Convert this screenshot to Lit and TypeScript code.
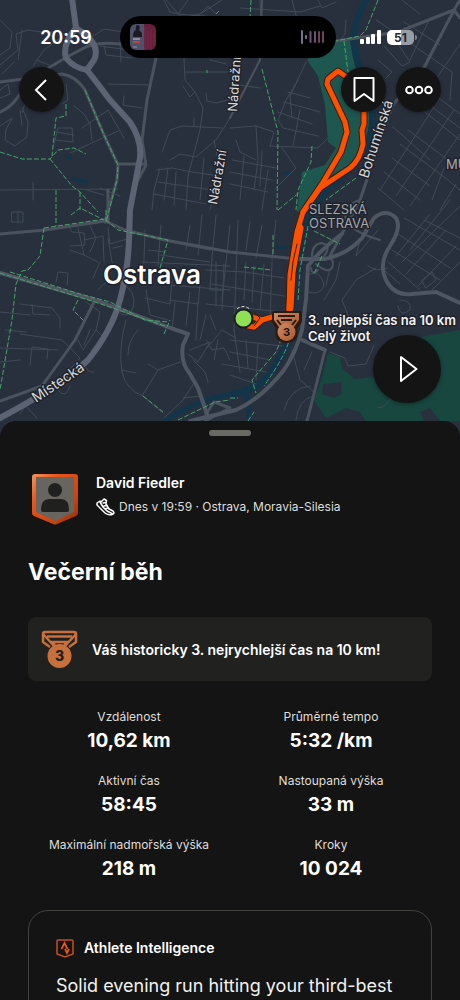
import { LitElement, html, css, svg } from "lit";
import { customElement } from "lit/decorators.js";

/* ---------- map geometry ---------- */
const minorRoads = [
  // north-west
  "M0 20L12 32L10 48L0 55M0 65L18 50L16 34L28 30L48 33L60 30M22 112L28 95M0 90L8 84L10 94L0 98M2 74L14 62M18 60L22 30M33 66L44 50L60 38M36 60L52 66M0 126L12 118L6 130L5 140L15 146L27 137L28 122L22 108M20 110L22 125M66 84L68 100L62 104M54 144L58 128L72 128L73 142L55 140M56 132L74 135M74 106L84 114L90 124L92 140M82 128L108 110L124 138M70 153L118 131M104 46L106 55L132 58M100 46L136 51M120 40L121 62M108 84L150 85M124 96L123 105L142 108M90 38L104 29L136 34M164 0L170 12L178 14L205 16M166 0L182 18L200 14L222 0M178 14L188 0M200 14L208 6L216 14",
  "M184 58L185 80L195 92L190 97L183 86M185 72L228 72M195 92L203 108L200 130L188 176L186 210M206 93L207 101L216 103L228 100M210 60L226 64M162 152L170 130L182 126L222 128M194 118L194 126M170 160L180 154L196 157L216 140L230 118M160 168L154 190L152 210M156 170L172 168L192 172L220 176M158 182L212 190M154 194L206 204M168 168L164 200M176 172L174 205M214 140L220 170L210 210M204 158L200 200",
  // west
  "M0 190L118 189M33 182L33 200M18 211V223M12 212H23V222H12ZM100 188L120 196M86 190L104 195",
  "M68 225L72 232L84 233L85 245L70 246M78 228L84 255L98 262M90 226L96 238L90 252M84 240L103 236L104 262M100 262L93 278M70 250L84 255M56 282L58 272L68 273L67 285M108 228L110 244L127 239M108 238L112 262L124 275M113 248L122 246M145 230L144 260L142 280M161 225L158 265M170 242L210 250M160 255L210 262M142 262L230 266M148 250L165 252",
  // south-west
  "M20 304L52 308L60 318L60 328M32 304L33 314L50 315M0 312L30 315M20 334L62 340M0 348L58 350M30 365L32 347L48 349L47 359M20 360L0 362M5 330L26 332M62 340L80 358L62 378L45 388M78 340L83 350L96 330M98 290Q104 280 118 281Q138 290 133 308Q128 320 118 312M86 302L100 312L96 330L106 340M90 330L84 345M126 320Q118 350 122 372Q126 390 143 396M138 330Q128 340 128 355M122 370L136 373M142 396L158 370L180 362M158 370L148 364M143 396L163 413M164 418L183 400L196 380M22 402L37 418M20 414L26 405M84 366Q90 374 94 372M58 390Q66 400 70 386M183 398L202 396M190 350L210 342L198 362L188 354M193 360L205 372L208 382",
  // center
  "M190 225L186 250M202 215L198 255M216 215L212 258L210 290L224 290M230 225L222 300M238 220L234 330M250 222L246 250M262 225L256 258M276 220L272 260M168 285L230 290M170 300L198 304L200 285M145 298L170 304L172 280M146 290L150 315L168 320M175 302L172 330M198 302L196 340M190 292L186 325M205 270L245 272L284 278M212 284L284 296M206 304L282 312M216 262V306M224 264L222 310M246 262L244 300M254 266L252 302M264 264L260 310M272 262L270 320M206 340L212 350L224 348L230 360M207 348L222 330L236 338M216 330L210 315M200 340L206 315M230 340L282 346M234 330L240 372M246 340L248 368M258 344L256 380M230 352L270 360M222 364L266 372M230 375L256 384M218 340L214 360",
  // north-center
  "M240 8L300 12L320 6M260 0L262 45M245 20L266 18M248 30L262 28M292 0L300 30L310 24M318 0L322 8L336 2M346 20L345 34L336 45M230 104L232 72M232 84L260 88M306 62L290 96L292 118M298 80L286 100L278 120L283 128L318 136M288 92L310 98M284 102L320 112M278 112L312 124M230 128L256 126L274 132L270 146L318 148L328 138M236 140L240 152L256 160M256 126L258 160L254 190M232 160L276 168M230 172L272 180M230 184L268 192M244 156L240 200M262 150L260 186M268 170L262 210M300 110L293 146M282 148L296 168L276 188",
  // north-east
  "M384 46L402 66L410 62L394 38M378 60L392 72L386 78M398 34L420 50L452 72L450 100M404 22L440 45M402 0L420 14M376 20L400 36M430 18L410 60M446 24L416 80M460 44L430 88M456 10L440 35M425 112L460 140M428 104L460 128M436 96L460 114M408 130L448 160L460 170M400 144L448 180L460 190M392 158L430 186M384 172L420 200M378 188L404 210M440 98L380 190M454 110L396 196M460 134L410 206M444 168L432 200M456 184L440 210M392 126L430 160",
  // east
  "M460 206L402 262M450 200L410 250M404 218L460 250M398 234L450 268M392 250L440 280M388 262L420 290M384 270L400 284M430 214L396 256M446 230L406 274M456 246L418 286M460 262L432 290M424 220L460 238M422 280L432 272L436 280L426 288ZM400 300Q412 300 410 310Q400 318 398 306M368 266L376 270L388 268M304 370L312 352M292 350L300 380L314 392M330 352L345 358L348 366L366 364L374 345M284 410Q290 388 310 386M296 420Q298 400 313 396M360 240L356 256L378 230M340 262L336 280L324 300M350 320L342 300L356 280L376 268M326 285L330 268M310 274Q320 270 324 284Q322 296 308 292M378 408Q386 408 392 396L386 378",
];
const midRoads = [
  "M0 82L62 74Q76 76 85 90L104 135L118 165L117 180L105 222",
  "M0 112Q12 108 24 88Q40 70 88 46Q100 42 120 44",
  "M156 58L147 100L142 140L146 165L138 180",
  "M118 164H145",
  "M0 234L45 230L105 221L125 230L165 240L230 252L297 259",
  "M108 222V190M128 240L128 280",
  "M336 41L398 32L454 10L460 0M454 10L425 66L392 106L360 200L330 256M454 10L460 18",
  "M325 350L315 390L307 421",
  "M0 401L42 386L75 340L94 302",
  "M205 421L230 408L214 402L206 414",
];
const thinMainRoads = [
  "M230 118L260 60L262 0M312 256Q312 244 322 243Q332 246 324 256M316 264Q328 274 332 268Q336 256 322 258M311 268Q312 276 318 270M380 240Q352 232 346 220Q342 206 360 200",
];
const bigRoads = [
  "M0 273L95 300L165 326L188 334L183 345Q180 362 190 374L198 388L207 414",
  "M296 259H325Q348 254 362 238L374 218Q386 208 396 218Q402 228 390 246Q378 264 386 280Q394 296 412 294L436 292L460 303",
  "M342 234Q320 250 308 266L306 300L302 330Q296 352 284 370Q262 398 236 410L190 421",
  "M302 340L325 350",
];
const highway = [
  "M72 -2L76 28Q62 44 66 58Q74 68 87 70Q98 84 110 100L130 122Q142 140 140 158L130 210L129 240Q128 270 120 300Q112 330 88 360Q60 386 0 418",
  "M76 28Q102 44 94 60L87 70",
];
const trails = [
  "M85 90L104 135L118 165L117 180L106 222",
  "M66 104V116L56 118L52 156M0 152L22 159H50L58 150L74 148L86 154M50 159L72 186L80 192L98 212M80 192V210",
  "M56 190V226M44 228L105 219L118 230L168 240L164 254L160 268M44 228L40 256L28 270L22 271L16 284L12 320L0 390M71 215L80 208L104 220M106 210V222",
  "M0 273L95 302L165 326M10 272L80 294L110 302L145 320L168 322M78 300L73 310L84 321M164 334L170 320M143 396L163 412",
  "M178 420L215 402L230 400M251 0L250 18L252 28M262 69L278 132L277 210",
  "M378 0L366 30L360 36L336 41M344 41L348 72M312 146L311 162L298 190L296 210M278 210Q290 200 300 192",
  "M356 178L326 200M314 231L340 244M322 256L314 274M308 226L300 270L298 300M244 267L272 270M273 235V255M284 332L276 352L252 380L256 393M290 336Q288 352 264 386M230 398H238M248 421L254 412M207 70V73M216 14L219 11",
];
const outwardLeg = "M289 312L290 275L297 232L303 212L322 184L341 152L347 132L345 122L327 84L328 79L338 71L348 78";
const returnLeg = "M364 112V124L362 130L363 144Q360 160 350 168L320 188L303 212";
const startLeg = "M252 317L262 320L272 317M248 326L254 327L262 320";

interface Stat { label: string; value: string }

@customElement("activity-map")
class ActivityMap extends LitElement {
  static styles = css`
    :host { display: block; }
    .canvas { display: block; width: 100%; height: 100%; }
    .minor { stroke: #414a58; stroke-width: 1; }
    .thin { stroke: #4a525e; stroke-width: 2; }
    .mid { stroke: #4a525e; stroke-width: 3; }
    .big { stroke: #4e5662; stroke-width: 4; }
    .highway { stroke: #5c6474; stroke-width: 6; }
    .water { stroke: #13354a; }
    .trail { stroke: #46a468; stroke-width: 1; stroke-dasharray: 5 2; }
    .route-edge { stroke: #3a1d10; }
    .route { stroke: #fc5200; }
    .label { font-family: Inter, "Noto Sans", sans-serif; fill: #d6d8da; stroke: #1f2329; stroke-width: 3; paint-order: stroke; stroke-linejoin: round; font-size: 13px; }
    .street { font-size: 14px; }
    .district { fill: #a4a8ae; }
    .city { fill: #ffffff; font-size: 26px; font-weight: 600; }
    .pin-label { fill: #f4f4f4; font-weight: 600; }
    .three { font: 700 11px Inter, sans-serif; fill: #1d1410; }
  `;
  render() {
    const lines = (list: string[], cls: string) => svg`<g class=${cls}>${list.map((d) => svg`<path d=${d} />`)}</g>`;
    return html`
      <svg class="canvas" viewBox="0 0 460 440" preserveAspectRatio="xMidYMin slice" role="img" aria-label="Mapa trasy">
        <defs><linearGradient id="bronze" x1="0" y1="0" x2="1" y2="1"><stop offset="0" stop-color="#d08c62" /><stop offset="1" stop-color="#a8592f" /></linearGradient></defs>
        <rect width="460" height="440" fill="#29303d" />
        <path fill="#1d574f" d="M307 60L337 41H350L354 60L372 102L366 150L345 178L308 208L297 212L302 172L325 165L336 148L328 142L325 105L318 76Z" />
        <path fill="#18473f" d="M328 353L340 357L342 368L354 379L388 376L394 342L460 330V421H366L360 412L346 408L326 418L314 400L322 378Z" />
        <path fill="#29303d" d="M323 384L341 382L342 394L334 398L322 394ZM420 412L430 408L440 421H424ZM348 352L360 354L354 366L346 362Z" />
        <g fill="none" stroke-linecap="round" stroke-linejoin="round">
          <path class="water" stroke-width="7" d="M368 -4Q352 24 354 42Q356 64 366 84Q378 118 368 142Q358 164 336 182Q306 208 302 240L296 280L292 330Q284 360 260 384Q246 392 232 394" />
          <path class="water" stroke-width="5" d="M232 394Q190 402 164 422M246 390L250 424" />
          <path class="water" stroke-width="4" d="M74 179L86 182M67 157H70M286 173H290M278 247H290" />
          ${lines(minorRoads, "minor")}
          ${lines(thinMainRoads, "thin")}
          ${lines(midRoads, "mid")}
          ${lines(bigRoads, "big")}
          ${lines(highway, "highway")}
        </g>
        <g fill="none">${lines(trails, "trail")}</g>
        <g fill="none" stroke-linecap="round" stroke-linejoin="round">
          <g class="route-edge">
            <path stroke-width="7" d=${outwardLeg} />
            <path stroke-width="7" d=${returnLeg} />
            <path stroke-width="7" d=${startLeg} />
            <path stroke-width="9" d="M290 308L292 272L300 228" />
          </g>
          <g class="route">
            <path stroke-width="5" d=${outwardLeg} />
            <path stroke-width="5" d=${returnLeg} />
            <path stroke-width="5" d=${startLeg} />
            <path stroke-width="7" d="M290 308L292 272L300 228" />
          </g>
          <path stroke="#3a1d10" stroke-width="1" d="M254 312L260 318L254 326M291 280L293 262L297 244" />
        </g>
        <circle cx="243.500" cy="318.500" r="9" fill="#8fe055" stroke="#1b1f1b" stroke-width="2" />
        <path d="M237 309Q243 304 250 309" fill="none" stroke="#dfe2df" stroke-width="1" stroke-dasharray="3 2" />
        <g stroke-linejoin="round">
          <path d="M274 313H300V321L295 328Q298 341 286.500 341Q275 341 278 328L274 321Z" fill="#2a1a12" stroke="#2a1a12" stroke-width="4" />
          <path d="M274 313H299V320L294 327H279L274 320Z" fill="url(#bronze)" />
          <path d="M278 316H295M281 320H292M277 320L281 325M296 320L292 325" fill="none" stroke="#2a1a12" stroke-width="2" />
          <circle cx="286.500" cy="332" r="9" fill="url(#bronze)" />
          <text class="three" x="283" y="336">3</text>
        </g>
        <text class="label" transform="translate(237 112) rotate(-86)">Nádražní</text>
        <text class="label" transform="translate(217 205) rotate(-80)">Nádražní</text>
        <text class="label street" transform="translate(368 179) rotate(-72)">Bohumínská</text>
        <text class="label street" transform="translate(36 403) rotate(-34)">Místecká</text>
        <text class="label district" x="309" y="214">SLEZSKÁ</text>
        <text class="label district" x="309" y="228">OSTRAVA</text>
        <text class="label district" x="446" y="169">MU</text>
        <text class="label city" x="103" y="284">Ostrava</text>
        <text class="label pin-label" x="308" y="325">3. nejlepší čas na 10 km</text>
        <text class="label pin-label" x="308" y="341">Celý život</text>
      </svg>
    `;
  }
}

@customElement("app-root")
class AppRoot extends LitElement {
  static styles = css`
    :host { display: block; height: 100vh; overflow: hidden; background: #141414; color: #fff; font-family: Inter, "Noto Sans", sans-serif; }
    * { box-sizing: border-box; }
    h1, h2, p, dl, dd, dt { margin: 0; }
    button { border: 0; padding: 0; color: #fff; background: #141414; border-radius: 50%; display: grid; place-items: center; cursor: pointer; box-shadow: 0 1px 4px #0006; }
    .hero { position: relative; aspect-ratio: 460 / 440; }
    .map { height: 100%; }
    .overlay { position: absolute; inset: 0; display: flex; flex-direction: column; padding: 16px 19px 37px; }
    .status { display: grid; grid-template-columns: 1fr 216px 1fr; align-items: center; margin: 0 -15px 0 -19px; }
    .time { font-size: 18px; font-weight: 600; text-align: center; padding-left: 12px; }
    .island { height: 42px; border-radius: 21px; background: #000; display: flex; align-items: center; justify-content: space-between; padding: 0 11px 0 10px; }
    .signals { display: flex; align-items: center; gap: 6px; padding-left: 24px; }
    .battery { display: flex; align-items: center; gap: 1px; }
    .charge { width: 27px; height: 15px; border-radius: 5px; background: linear-gradient(90deg, #fff 51%, #989ca4 51%); color: #24272d; font-size: 12px; line-height: 15px; font-weight: 700; text-align: center; }
    .nub { width: 2px; height: 5px; border-radius: 0 2px 2px 0; background: #7c818b; }
    .actions { display: flex; gap: 10px; margin-top: 9px; }
    .round { width: 45px; height: 45px; }
    .back { margin-right: auto; }
    .play { width: 68px; height: 68px; margin: auto 0 0 auto; }
    .sheet { position: relative; margin-top: -19px; border-radius: 16px 16px 0 0; background: #141414; padding: 9px 28px 0; }
    .handle { width: 42px; height: 6px; border-radius: 3px; background: #6a6a65; margin: 0 auto; }
    .athlete { display: flex; align-items: flex-start; gap: 16px; margin-top: 37px; padding-left: 3px; }
    .who { display: flex; flex-direction: column; gap: 4px; }
    .name { font-size: 14px; line-height: 20px; font-weight: 600; }
    .meta { display: flex; align-items: center; gap: 4px; font-size: 12px; line-height: 20px; color: #deded9; }
    .title { font-size: 23px; line-height: 32px; font-weight: 700; margin-top: 31px; }
    .award { display: flex; align-items: center; gap: 14px; margin-top: 29px; height: 64px; padding: 0 13px; border-radius: 8px; background: #21211f; font-size: 14px; font-weight: 600; }
    .three { font: 800 14px Inter, sans-serif; fill: #21211f; }
    .stats { display: grid; grid-template-columns: 1fr 1fr; row-gap: 18px; margin-top: 26px; text-align: center; }
    .stat-label { font-size: 12px; line-height: 20px; color: #deded9; }
    .stat-value { font-size: 19px; line-height: 24px; font-weight: 700; margin-top: 2px; }
    .insight { border: 1px solid #42423f; border-radius: 20px; margin-top: 29px; padding: 27px 27px 32px; }
    .insight-head { display: flex; align-items: center; gap: 10px; font-size: 14px; line-height: 20px; font-weight: 600; }
    .insight-text { font-size: 18px; line-height: 24px; margin-top: 16px; color: #f2f2f0; }
  `;

  stats: Stat[] = [
    { label: "Vzdálenost", value: "10,62 km" },
    { label: "Průměrné tempo", value: "5:32 /km" },
    { label: "Aktivní čas", value: "58:45" },
    { label: "Nastoupaná výška", value: "33 m" },
    { label: "Maximální nadmořská výška", value: "218 m" },
    { label: "Kroky", value: "10 024" },
  ];

  private statusBar() {
    return html`
      <div class="status">
        <div class="time">20:59</div>
        <div class="island">
          <svg width="26" height="26" viewBox="0 0 26 26" aria-hidden="true">
            <clipPath id="cover"><rect width="26" height="26" rx="6" /></clipPath>
            <g clip-path="url(#cover)">
              <rect width="14" height="26" fill="#50506a" /><rect x="14" width="12" height="26" fill="#64203c" />
              <path d="M3 13Q3 7 6 6Q5 1 8 1Q11 2 9 6L12 9V13Z" fill="#1b1b25" />
              <path d="M3 15H10" stroke="#c9c9d4" /><path d="M3 18H10" stroke="#b8493f" stroke-width="2" /><path d="M3 23H7" stroke="#8f8fa2" />
              <path d="M15 3V26M18 7V24M21 5V26M24 9V22" stroke="#7a2b48" />
            </g>
          </svg>
          <svg width="24" height="14" viewBox="0 0 24 14" fill="none" stroke-width="2" stroke-linecap="round" aria-hidden="true">
            <path d="M1 1V13M5 6V8" stroke="#7c7090" /><path d="M9.500 2V12M14 2V12" stroke="#71507a" /><path d="M18 2V12M22 2V12" stroke="#75405f" />
          </svg>
        </div>
        <div class="signals">
          <svg width="21" height="14" viewBox="0 0 21 14" fill="#fff" aria-hidden="true">
            <rect y="9" width="4" height="5" rx="1" /><rect x="6" y="7" width="4" height="7" rx="1" /><rect x="11" y="4" width="4" height="10" rx="1" /><rect x="17" width="4" height="14" rx="1" />
          </svg>
          <div class="battery"><div class="charge">51</div><div class="nub"></div></div>
        </div>
      </div>`;
  }

  render() {
    return html`
      <header class="hero">
        <activity-map class="map"></activity-map>
        <div class="overlay">
          ${this.statusBar()}
          <nav class="actions">
            <button class="round back" aria-label="Zpět">
              <svg width="24" height="24" viewBox="0 0 24 24" fill="none" stroke="#fff" stroke-width="2"><path d="M16 2L6 12L16 22" /></svg>
            </button>
            <button class="round" aria-label="Uložit">
              <svg width="24" height="28" viewBox="0 0 24 28" fill="none" stroke="#fff" stroke-width="2" stroke-linejoin="round"><path d="M2.500 2H21.500V25L12 18L2.500 25Z" /></svg>
            </button>
            <button class="round" aria-label="Další">
              <svg width="28" height="10" viewBox="0 0 28 10" fill="none" stroke="#fff" stroke-width="2"><circle cx="4.500" cy="5" r="3.300" /><circle cx="14" cy="5" r="3.300" /><circle cx="23.500" cy="5" r="3.300" /></svg>
            </button>
          </nav>
          <button class="play" aria-label="Přehrát">
            <svg width="22" height="28" viewBox="0 0 22 28" fill="none" stroke="#fff" stroke-width="2" stroke-linejoin="round"><path d="M5 2V26L20.500 14Z" /></svg>
          </button>
        </div>
      </header>
      <main class="sheet">
        <div class="handle"></div>
        <section class="athlete">
          <svg width="49" height="52" viewBox="0 0 49 52" aria-hidden="true">
            <defs><linearGradient id="rim" x1="0" y1="0" x2="1" y2="1"><stop offset="0" stop-color="#f5935a" /><stop offset=".3" stop-color="#e8541b" /><stop offset=".7" stop-color="#c9440f" /><stop offset="1" stop-color="#8a2c08" /></linearGradient></defs>
            <path d="M4 1H44Q47 1 47 4V40Q47 42 45 43L26 51Q24.500 52 22 51L3 43Q1 42 1 40V4Q1 1 4 1Z" fill="url(#rim)" />
            <path d="M5 4H43V39L24 48L5 39Z" fill="#66655f" />
            <circle cx="24" cy="17" r="7" fill="#20201e" />
            <path d="M10 37Q10 26 18 26H30Q38 26 38 37Q38 39 36 39H12Q10 39 10 37Z" fill="#20201e" />
          </svg>
          <div class="who">
            <div class="name">David Fiedler</div>
            <div class="meta">
              <svg width="19" height="18" viewBox="0 0 19 18" fill="none" stroke="#fff" stroke-width="1.500" stroke-linejoin="round" stroke-linecap="round" aria-hidden="true">
                <path d="M1 5L4 3L5 4L8 1L10.500 2.500L10 6L13 11L17 13Q19 15 17 16Q13 18 9 15L5 11L1 7Z" />
                <path d="M4 4L7 9L11 13L16 15.500M7 5L10 4.500M8 8L11 7.500M10 10.500L12.500 10" />
              </svg>
              <span>Dnes v 19:59 · Ostrava, Moravia-Silesia</span>
            </div>
          </div>
        </section>
        <h1 class="title">Večerní běh</h1>
        <section class="award">
          <svg width="37" height="38" viewBox="0 0 37 38" aria-hidden="true">
            <g fill="none" stroke="#c8703c" stroke-width="2.500" stroke-linejoin="round"><path d="M9 17L2 12V4Q2 2 4 2H33Q35 2 35 4V12L28 17" /><path d="M2 4L13 16M35 4L24 16M6 6.500H31M10 12H27M12 12L14 16M25 12L23 16" /></g>
            <circle cx="18.500" cy="26" r="12" fill="#c8703c" />
            <text class="three" x="14" y="31">3</text>
          </svg>
          <span>Váš historicky 3. nejrychlejší čas na 10 km!</span>
        </section>
        <dl class="stats">
          ${this.stats.map((s) => html`<div><dt class="stat-label">${s.label}</dt><dd class="stat-value">${s.value}</dd></div>`)}
        </dl>
        <section class="insight">
          <h2 class="insight-head">
            <svg width="18" height="19" viewBox="0 0 18 19" fill="none" aria-hidden="true">
              <path d="M2 1H16Q17 1 17 2V15L9 18L1 15V2Q1 1 2 1Z" stroke="#c2501f" stroke-width="1.500" />
              <path d="M5.500 10L8.500 4L11.500 10M9 10L11 14L13 10" stroke="#f2560f" stroke-width="1.700" />
            </svg>
            Athlete Intelligence
          </h2>
          <p class="insight-text">Solid evening run hitting your third-best</p>
        </section>
      </main>
    `;
  }
}
